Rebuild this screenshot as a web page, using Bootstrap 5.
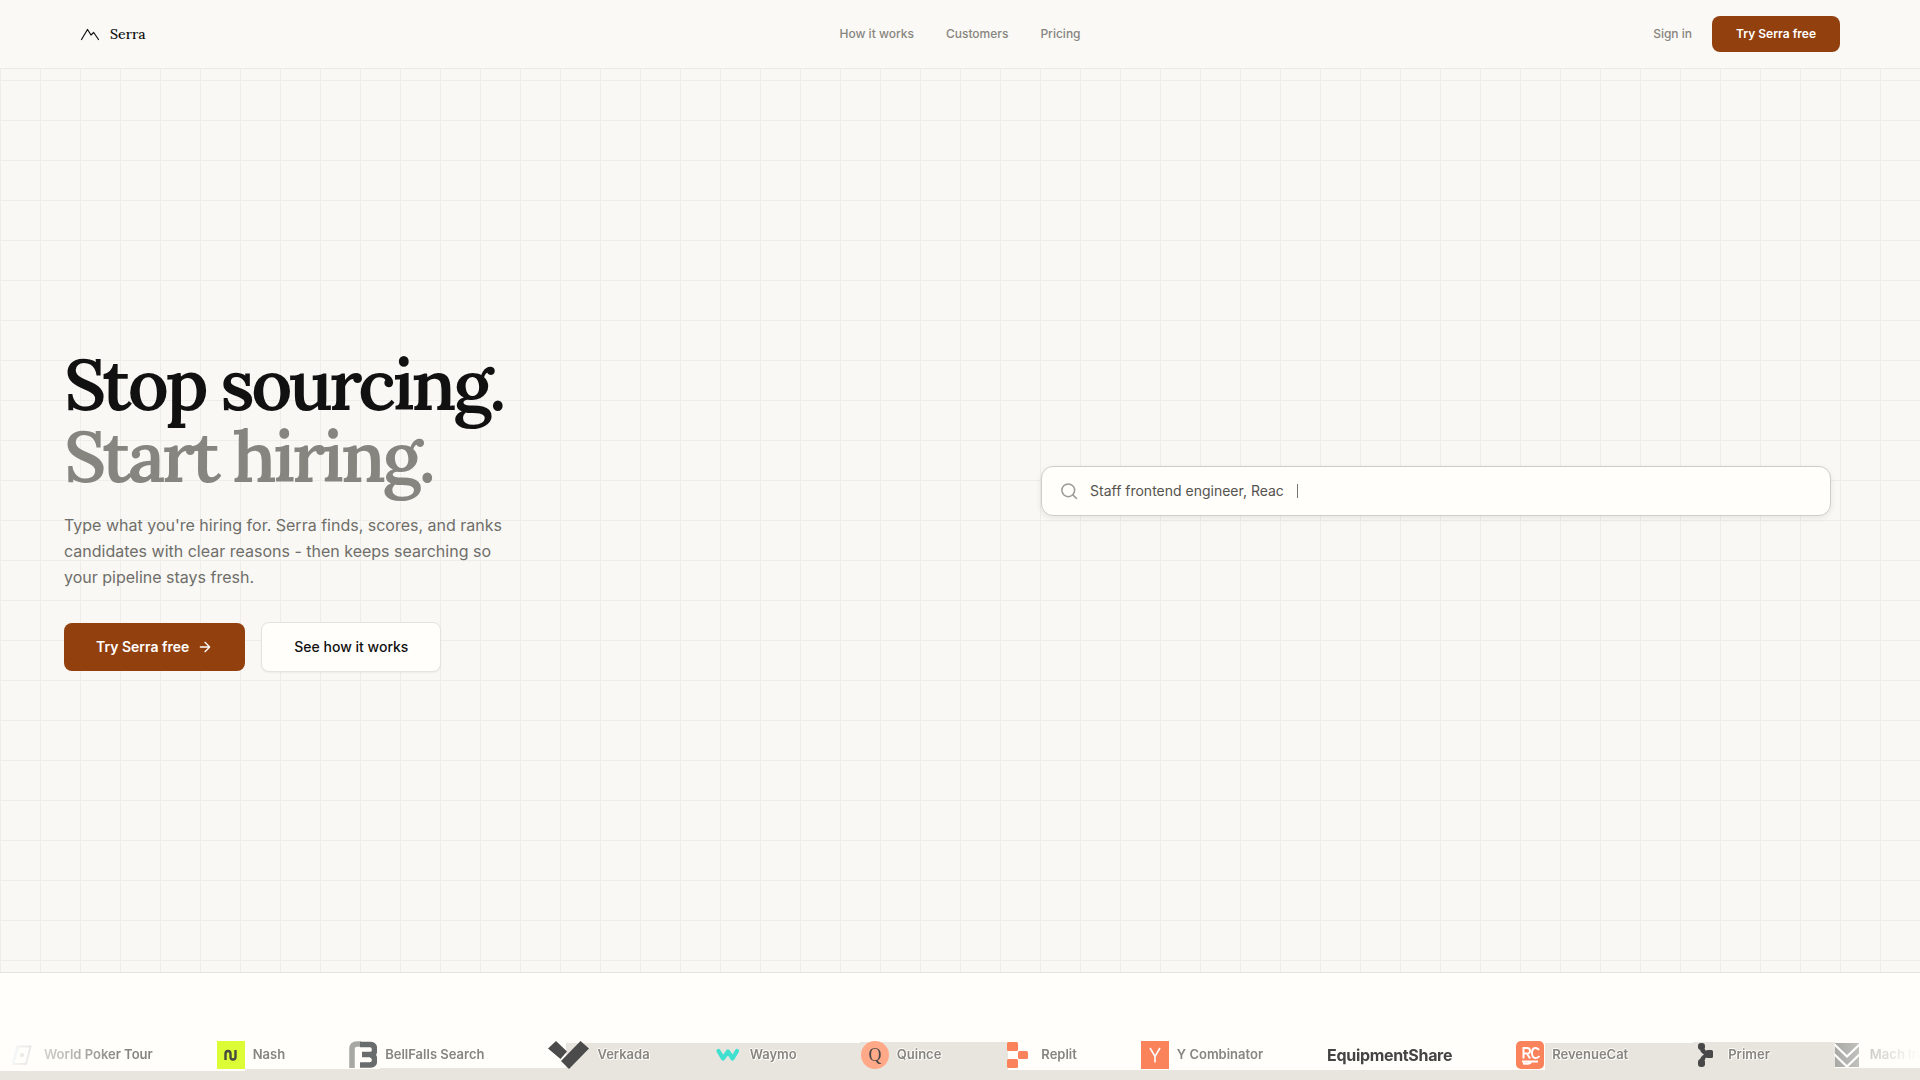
<!DOCTYPE html>
<html lang="en">
<head>
<meta charset="utf-8">
<meta name="viewport" content="width=device-width, initial-scale=1">
<title>Serra</title>
<link href="https://cdn.jsdelivr.net/npm/bootstrap@5.3.0/dist/css/bootstrap.min.css" rel="stylesheet">
<style>
:root{--ink:#111;--muted:#87857f;--paper:#faf9f6;--surface:#fffefb;--rust:#92400e;--sand:#e8e5df}
body{font-family:Inter,"Liberation Sans",sans-serif;background:var(--paper);color:var(--ink);height:100vh;overflow:hidden}
a{text-decoration:none}
.serif{font-family:Lora,"Liberation Serif",serif}
.topbar{height:69px;padding:0 80px;border-bottom:1px solid #eceae6}
.topbar-side{flex:1 1 0}
.brand-name{font-size:14px;line-height:24px;font-weight:500;color:var(--ink)}
.top-link{font-size:12px;line-height:18px;font-weight:500;color:var(--muted)}
.btn-rust{--bs-btn-bg:var(--rust);--bs-btn-color:#fff;--bs-btn-hover-bg:#7c350b;--bs-btn-hover-color:#fff;--bs-btn-border-width:0;--bs-btn-border-radius:8px}
.btn-top{font-size:12px;line-height:18px;font-weight:600;padding:9px 24px}
.hero{padding:0 64px 22px;background-color:#f9f8f5;background-image:linear-gradient(#eeedea 1px,transparent 1px),linear-gradient(90deg,#eeedea 1px,transparent 1px);background-size:40px 40px;background-position:0 11px}
.headline{font-size:72px;line-height:72px;font-weight:600;letter-spacing:-.05em;margin-bottom:20px}
.headline span{color:var(--muted)}
.pitch{font-size:16px;line-height:26px;color:#6f6e69;max-width:448px;margin-bottom:32px}
.btn-hero{font-size:14px;line-height:20px;padding:14px 32px}
.btn-plain{--bs-btn-bg:var(--surface);--bs-btn-color:#111;--bs-btn-border-color:#e5e3de;--bs-btn-hover-bg:#f5f4f0;--bs-btn-hover-border-color:#dddbd6;--bs-btn-border-radius:8px;box-shadow:0 1px 2px #0000000d}
.search-col{padding:0 25px 38px 81px}
.searchbox{height:50px;padding:0 18px;gap:12px;background:var(--surface);border:1px solid #cfcdc8;border-radius:12px;box-shadow:0 2px 6px #00000014}
.searchbox input{font-size:14px;line-height:20px;width:195px;color:#55534e;background:none;border:0;padding:0;outline:0}
.type-caret{width:1px;height:14px;background:#77756f}
.customers{height:108px;background:var(--surface);border-top:1px solid #e5e3de;overflow:hidden}
.backdrop{left:0;bottom:0;width:100%;height:38px}
.marquee-track{gap:64px;padding:68px 0 0 8px;-webkit-mask-image:linear-gradient(90deg,transparent,#000 120px,#000 calc(100% - 120px),transparent);mask-image:linear-gradient(90deg,transparent,#000 120px,#000 calc(100% - 120px),transparent)}
.client{height:28px;gap:8px;font-size:13px;font-weight:600;color:var(--muted);white-space:nowrap;text-shadow:1px 1px 0 #fffefb,-1px 0 0 #fffefb,0 -1px 0 #fffefb}
.client svg{flex:none;text-shadow:none;font-weight:400}
.client-word{font-size:16px;color:#444;font-weight:700;letter-spacing:-.02em}
</style>
</head>
<body class="d-flex flex-column">
<header class="topbar d-flex align-items-center flex-shrink-0">
  <div class="topbar-side d-flex">
    <a href="#" class="d-flex align-items-center gap-2">
      <svg width="22" height="22" viewBox="0 0 22 22" fill="none" stroke="#111" stroke-width="1.200" stroke-linecap="round" stroke-linejoin="round"><path d="M1.500 16.500 7.500 6.500 11 12l2.700-2.500L18.500 16.500"/></svg>
      <span class="brand-name serif">Serra</span>
    </a>
  </div>
  <nav class="d-flex gap-4" aria-label="Main">
    <a class="top-link me-2" href="#">How it works</a>
    <a class="top-link me-2" href="#">Customers</a>
    <a class="top-link" href="#">Pricing</a>
  </nav>
  <div class="topbar-side d-flex justify-content-end align-items-center">
    <a class="top-link me-3 pe-1" href="#">Sign in</a>
    <button type="button" class="btn btn-rust btn-top">Try Serra free</button>
  </div>
</header>

<main class="hero flex-grow-1 d-flex">
  <div class="row g-0 w-100 align-items-center">
    <div class="col-6">
      <h1 class="headline serif">Stop sourcing.<br><span>Start hiring.</span></h1>
      <p class="pitch">Type what you're hiring for. Serra finds, scores, and ranks candidates with clear reasons - then keeps searching so your pipeline stays fresh.</p>
      <div class="d-flex align-items-center gap-3">
        <button type="button" class="btn btn-rust btn-hero fw-semibold d-flex align-items-center gap-2">Try Serra free
          <svg width="16" height="16" viewBox="0 0 24 24" fill="none" stroke="currentColor" stroke-width="2" stroke-linecap="round" stroke-linejoin="round"><path d="M5 12h14M12 5l7 7-7 7"/></svg>
        </button>
        <button type="button" class="btn btn-plain btn-hero fw-medium">See how it works</button>
      </div>
    </div>
    <div class="col-6 search-col">
      <div class="searchbox d-flex align-items-center">
        <svg width="18" height="18" viewBox="0 0 24 24" fill="none" stroke="#9c9a95" stroke-width="2" stroke-linecap="round"><circle cx="11" cy="11" r="8.500"/><path d="m17.500 17.500 4.500 4.500"/></svg>
        <input type="text" aria-label="Search candidates" value="Staff frontend engineer, Reac">
        <span class="type-caret"></span>
      </div>
    </div>
  </div>
</main>

<section class="customers position-relative flex-shrink-0" aria-label="Customers">
  <svg class="backdrop position-absolute" viewBox="0 0 1920 38" preserveAspectRatio="none" fill="#e8e5df" shape-rendering="crispEdges"><path d="M0 29H245V27H380V26H566V1H860V0H1008V28H1545V1H1693V0H1835V26H1920V38H0Z"/></svg>
  <div class="marquee-track position-relative d-flex">
    <div class="client d-flex align-items-center">
      <svg width="28" height="28" viewBox="0 0 28 28" fill="none"><path d="M9 5h14l-5 18H4z" fill="#fff"/><path d="M10 5 5 22" stroke="#a9cbe6" stroke-width="3"/><path d="M9 5.500h13.500L18 23H4.500" stroke="#aaa" stroke-width="2"/><circle cx="14" cy="14" r="2" fill="#888"/></svg>
      World Poker Tour</div>
    <div class="client d-flex align-items-center">
      <svg width="28" height="28" viewBox="0 0 28 28"><path fill="#dcfc36" d="M0 0h28v28H0z"/><path d="M8.500 19v-6q0-3 2.500-3t2.500 3v3q0 2.500 2.500 2.500t2.500-2.500V9" fill="none" stroke="#484a40" stroke-width="2.400"/></svg>
      Nash</div>
    <div class="client d-flex align-items-center">
      <svg width="28" height="28" viewBox="0 0 28 28" fill="none" stroke-width="5.500"><path d="M3 27V8q0-5 5-5h4" stroke="#a7a8a3"/><path d="M11 3.500h10q4.500 0 4.500 4.500v1.500q0 4-4.500 4h-8M21 14q4.500 0 4.500 4.500v1q0 4.500-4.500 4.500H11" stroke="#686c6d"/></svg>
      BellFalls Search</div>
    <div class="client d-flex align-items-center">
      <svg width="41" height="28" viewBox="0 0 41 28" fill="#4b4b4b"><path d="m8 0 11 10.500-6.500 7.500L0 7.500zM32.500 0 41 7.500 21 28l-8-8z"/></svg>
      Verkada</div>
    <div class="client d-flex align-items-center">
      <svg width="28" height="28" viewBox="0 0 28 28" fill="none" stroke="#3fe0d0" stroke-width="4.200" stroke-linejoin="round" stroke-linecap="round"><path d="m4.500 10 4.500 7.500 5-7 4.500 7L23 10"/></svg>
      Waymo</div>
    <div class="client d-flex align-items-center">
      <svg width="28" height="28" viewBox="0 0 28 28"><circle cx="14" cy="14" r="14" fill="#ffa989"/><text x="14" y="19.500" text-anchor="middle" font-family="Liberation Serif" font-size="18" fill="#484848">Q</text></svg>
      Quince</div>
    <div class="client d-flex align-items-center">
      <svg width="28" height="28" viewBox="0 0 28 28" fill="#fa835c"><rect x="2" y="1" width="11" height="9" rx="1.500"/><rect x="13" y="10" width="10" height="8" rx="1.500"/><rect x="2" y="18" width="11" height="9" rx="1.500"/></svg>
      Replit</div>
    <div class="client d-flex align-items-center">
      <svg width="28" height="28" viewBox="0 0 28 28"><path fill="#fa835c" d="M0 0h28v28H0z"/><path d="m9 7 5 8.500L19 7M14 15v6.500" fill="none" stroke="#fff" stroke-width="1.600"/></svg>
      Y Combinator</div>
    <div class="client client-word d-flex align-items-center">EquipmentShare</div>
    <div class="client d-flex align-items-center">
      <svg width="28" height="28" viewBox="0 0 28 28"><rect width="28" height="28" rx="5" fill="#fa835c"/><path d="M7.500 17.500V7H11q3 0 3 2.800t-3 2.700H8m3 0 3 5M23 9Q21.500 6.500 19 7q-3 .500-3 5t3 5q2.500.500 4.500-2M6 20.500h16M7 22.500q8 1 8-2" fill="none" stroke="#fff" stroke-width="2"/></svg>
      RevenueCat</div>
    <div class="client d-flex align-items-center">
      <svg width="28" height="28" viewBox="0 0 28 28" fill="#484848"><rect x="6" y="2" width="7" height="7" rx="3"/><rect x="6" y="18" width="7" height="8" rx="3"/><rect x="14" y="9" width="7" height="8" rx="1.500"/><path d="M8 8h5q0 2 3 2v6q-3 0-3 3H8q0-3 4-5.500Q8 11 8 8z"/></svg>
      Primer</div>
    <div class="client d-flex align-items-center">
      <svg width="28" height="28" viewBox="0 0 28 28"><path fill="#858681" d="M1 2h24v24H1z"/><path d="m0 3 13 12.500L26 3M0 13l13 12.500L26 13" fill="none" stroke="#fff" stroke-width="2.200"/></svg>
      Mach Industries</div>
  </div>
</section>
<script src="https://cdn.jsdelivr.net/npm/bootstrap@5.3.0/dist/js/bootstrap.bundle.min.js"></script>
</body>
</html>
